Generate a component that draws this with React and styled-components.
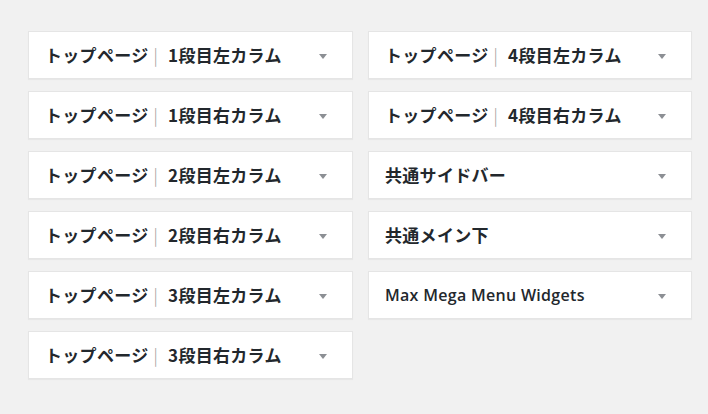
import React from "react";
import styled, { createGlobalStyle } from "styled-components";

const Global = createGlobalStyle`
  html, body { margin: 0; padding: 0; background: #f1f1f1; }
  body { font-family: "Noto Sans CJK JP", "Noto Sans", sans-serif; }
`;

const Page = styled.div`
  display: grid;
  grid-template-columns: 325px 324px;
  column-gap: 15px;
  align-items: start;
  padding: 31px 0 0 28px;
  min-height: 414px;
  box-sizing: border-box;
`;

const Column = styled.div`
  display: flex;
  flex-direction: column;
  gap: 12px;
`;

const Card = styled.div`
  height: 48px;
  box-sizing: border-box;
  background: #fff;
  border: 1px solid #e5e5e5;
  box-shadow: 0 1px 1px rgba(0, 0, 0, 0.04);
  display: flex;
  align-items: center;
  justify-content: space-between;
  padding: 0 25px 0 16px;
`;

const Title = styled.h3`
  margin: 0 0 1px;
  font-size: ${(p) => (p.$latin ? "16px" : "17px")};
  font-weight: ${(p) => (p.$latin ? 600 : 700)};
  font-family: ${(p) =>
    p.$latin
      ? '"Open Sans", "Noto Sans", sans-serif'
      : '"Noto Sans CJK JP", "Noto Sans", sans-serif'};
  color: #23282d;
  white-space: nowrap;
  line-height: 1;
  letter-spacing: 0.3px;
`;

const Bar = styled.span`
  color: #9a9a9a;
  font-weight: 300;
  margin: 0 10px 0 5px;
`;

const Arrow = styled.span`
  width: 0;
  height: 0;
  border-left: 4px solid transparent;
  border-right: 4px solid transparent;
  border-top: 5px solid #8c8f94;
  margin-top: 2px;
`;

const Widget = ({ title, latin }) => {
  const parts = title.split("｜");
  return (
    <Card>
      <Title $latin={latin}>
        {parts.length > 1 ? (
          <>
            {parts[0]}
            <Bar>|</Bar>
            {parts[1]}
          </>
        ) : (
          title
        )}
      </Title>
      <Arrow />
    </Card>
  );
};

const left = [
  "トップページ｜1段目左カラム",
  "トップページ｜1段目右カラム",
  "トップページ｜2段目左カラム",
  "トップページ｜2段目右カラム",
  "トップページ｜3段目左カラム",
  "トップページ｜3段目右カラム",
];

const right = [
  { t: "トップページ｜4段目左カラム" },
  { t: "トップページ｜4段目右カラム" },
  { t: "共通サイドバー" },
  { t: "共通メイン下" },
  { t: "Max Mega Menu Widgets", latin: true },
];

export default function App() {
  return (
    <>
      <Global />
      <Page>
        <Column>
          {left.map((t) => (
            <Widget key={t} title={t} />
          ))}
        </Column>
        <Column>
          {right.map((w) => (
            <Widget key={w.t} title={w.t} latin={w.latin} />
          ))}
        </Column>
      </Page>
    </>
  );
}
